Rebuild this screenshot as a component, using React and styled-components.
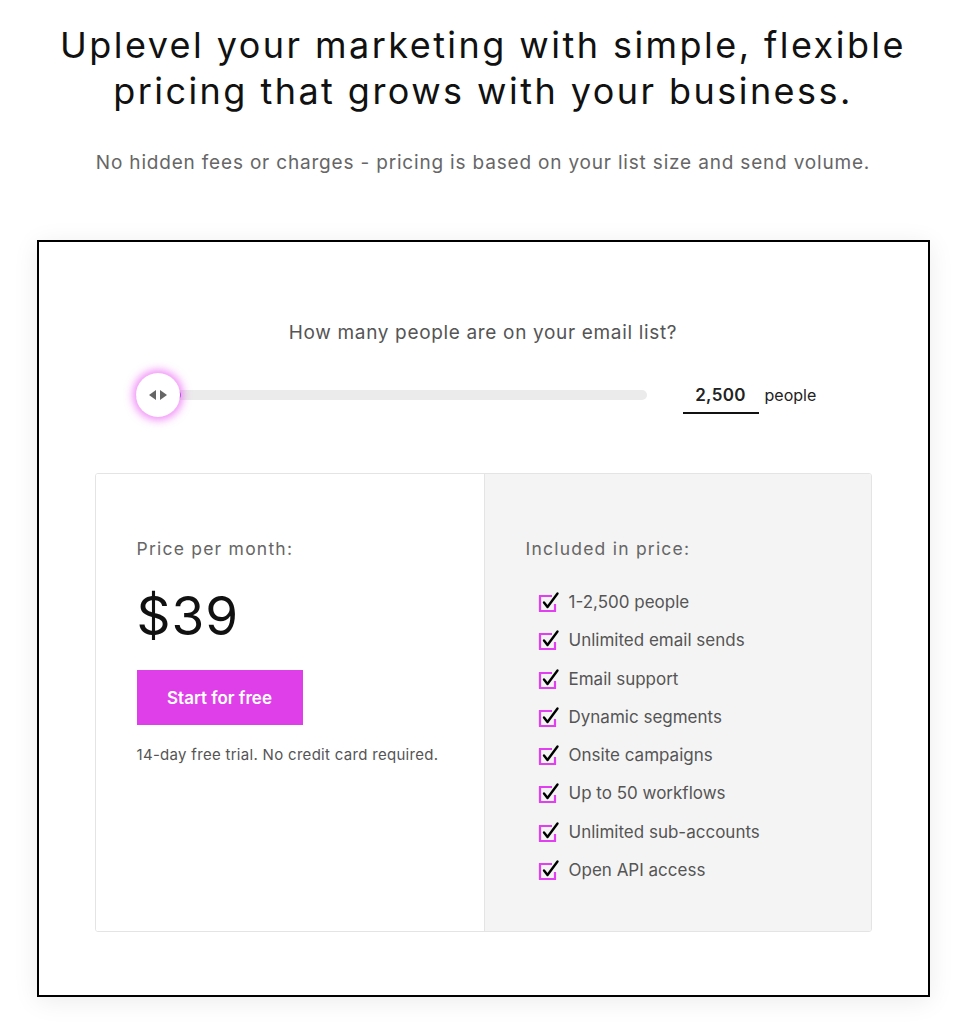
import styled, { createGlobalStyle } from "styled-components";

const GlobalStyle = createGlobalStyle`
  body {
    margin: 0;
    background: #ffffff;
    font-family: "Inter", "Noto Sans", sans-serif;
    color: #111111;
  }
  * { box-sizing: border-box; }
`;

const Page = styled.main`
  width: 966px;
  padding: 22px 0 28px;
  display: flex;
  flex-direction: column;
  align-items: center;
`;

const Title = styled.h1`
  margin: 0;
  font-size: 36px;
  line-height: 46px;
  font-weight: 400;
  text-align: center;
  letter-spacing: 0.068em;
  color: #111111;
`;

const Subtitle = styled.p`
  margin: 36px 0 0;
  font-size: 19px;
  line-height: 26px;
  color: #666666;
  letter-spacing: 0.043em;
  text-align: center;
`;

const Card = styled.section`
  margin-top: 64px;
  width: 893px;
  border: 2px solid #000000;
  box-shadow: 0 4px 24px rgba(0, 0, 0, 0.08);
  padding: 78px 56px 63px;
  display: flex;
  flex-direction: column;
  align-items: center;
`;

const Question = styled.p`
  margin: 0;
  font-size: 19px;
  line-height: 26px;
  color: #555555;
  letter-spacing: 0.035em;
`;

const SliderRow = styled.div`
  margin-top: 30px;
  width: 100%;
  display: flex;
  align-items: center;
  padding-left: 41px;
`;

const Track = styled.div`
  position: relative;
  width: 511px;
  height: 10px;
  border-radius: 5px;
  background: #ebebeb;
`;

const Fill = styled.div`
  position: absolute;
  left: 0;
  top: 0;
  height: 10px;
  border-radius: 5px;
  background: linear-gradient(90deg, #6f6cf0, #a04cf0);
`;

const Thumb = styled.div`
  position: absolute;
  top: 50%;
  width: 44px;
  height: 44px;
  margin-left: -22px;
  margin-top: -22px;
  border-radius: 50%;
  background: #ffffff;
  box-shadow: 0 0 9px 3px rgba(230, 60, 240, 0.6);
  display: flex;
  align-items: center;
  justify-content: center;
`;

const CountBox = styled.div`
  margin-left: 36px;
  display: flex;
  align-items: center;
`;

const CountValue = styled.div`
  width: 76px;
  border-bottom: 2px solid #111111;
  padding: 0 0 6px;
  text-align: center;
  font-size: 17px;
  font-weight: 600;
  color: #222222;
  line-height: 22px;
  margin-top: 8px;
  letter-spacing: 0.02em;
`;

const CountUnit = styled.span`
  margin-left: 6px;
  font-size: 16px;
  color: #222222;
`;

const Plans = styled.div`
  margin-top: 59px;
  width: 777px;
  height: 459px;
  border: 1px solid #e4e4e4;
  border-radius: 3px;
  display: grid;
  grid-template-columns: 388px 1fr;
  overflow: hidden;
`;

const Column = styled.div`
  padding: 63px 0 0 ${({ $pad }) => $pad}px;
  background: ${({ $shade }) => ($shade ? "#f4f4f4" : "#ffffff")};
  border-left: ${({ $shade }) => ($shade ? "1px solid #e4e4e4" : "none")};
`;

const Label = styled.p`
  margin: 0;
  font-size: 17.5px;
  line-height: 24px;
  color: #666666;
  letter-spacing: 0.07em;
`;

const Price = styled.div`
  margin-top: 25px;
  font-size: 53px;
  line-height: 60px;
  color: #111111;
  letter-spacing: 0.02em;
`;

const StartButton = styled.button`
  margin-top: 24px;
  width: 166px;
  height: 55px;
  border: none;
  background: #df3fe9;
  color: #ffffff;
  font-family: inherit;
  font-size: 17px;
  font-weight: 600;
  cursor: pointer;
`;

const Note = styled.p`
  margin: 20px 0 0;
  font-size: 15px;
  line-height: 20px;
  color: #555555;
  letter-spacing: 0.02em;
`;

const FeatureList = styled.ul`
  list-style: none;
  margin: 29px 0 0;
  padding: 0 0 0 12px;
  display: flex;
  flex-direction: column;
  gap: 14.3px;
`;

const Feature = styled.li`
  display: flex;
  align-items: center;
  gap: 9px;
  font-size: 17px;
  line-height: 24px;
  color: #555555;
`;

function CheckIcon() {
  return (
    <svg width="22" height="22" viewBox="0 0 22 22">
      <path d="M14 5 H2 V20 H17 V13" fill="none" stroke="#e23ff0" strokeWidth="2.2" />
      <path d="M6 11.5 L9.5 16 L19.5 2.5" fill="none" stroke="#000000" strokeWidth="2.4" strokeLinecap="round" strokeLinejoin="round" />
    </svg>
  );
}

function ArrowsIcon() {
  return (
    <svg width="22" height="12" viewBox="0 0 22 12">
      <path d="M9 1 L9 11 L2 6 Z" fill="#666666" />
      <path d="M13 1 L13 11 L20 6 Z" fill="#666666" />
    </svg>
  );
}

const features = [
  "1-2,500 people",
  "Unlimited email sends",
  "Email support",
  "Dynamic segments",
  "Onsite campaigns",
  "Up to 50 workflows",
  "Unlimited sub-accounts",
  "Open API access",
];

export default function App() {
  const progress = 4.5;
  return (
    <>
      <GlobalStyle />
      <Page>
        <Title>
          Uplevel your marketing with simple, flexible
          <br />
          pricing that grows with your business.
        </Title>
        <Subtitle>
          No hidden fees or charges - pricing is based on your list size and send volume.
        </Subtitle>

        <Card>
          <Question>How many people are on your email list?</Question>
          <SliderRow>
            <Track>
              <Fill style={{ width: `${progress * 2}%` }} />
              <Thumb style={{ left: `${progress}%` }}>
                <ArrowsIcon />
              </Thumb>
            </Track>
            <CountBox>
              <CountValue>2,500</CountValue>
              <CountUnit>people</CountUnit>
            </CountBox>
          </SliderRow>

          <Plans>
            <Column $pad={41}>
              <Label>Price per month:</Label>
              <Price>$39</Price>
              <StartButton type="button">Start for free</StartButton>
              <Note>14-day free trial. No credit card required.</Note>
            </Column>
            <Column $shade $pad={41}>
              <Label>Included in price:</Label>
              <FeatureList>
                {features.map((f) => (
                  <Feature key={f}>
                    <CheckIcon />
                    {f}
                  </Feature>
                ))}
              </FeatureList>
            </Column>
          </Plans>
        </Card>
      </Page>
    </>
  );
}
